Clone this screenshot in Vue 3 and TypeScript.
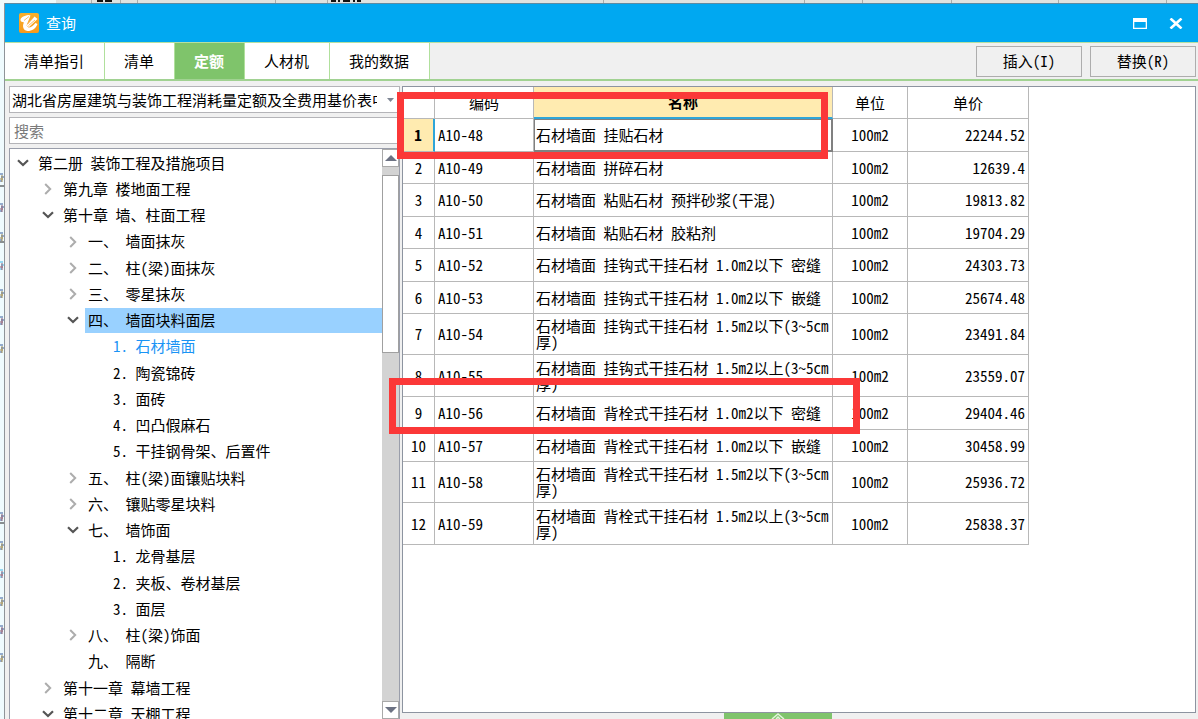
<script setup lang="ts">
import { ref } from 'vue'

interface TreeNode {
  level: number
  label: string
  state: 'open' | 'closed' | 'leaf'
  mark?: 'selected' | 'active'
}

interface PriceRow {
  code: string
  name: string
  price: string
  tall?: boolean
}

const tabs: string[] = ['清单指引', '清单', '定额', '人材机', '我的数据']
const currentTab = ref('定额')
const keyword = ref('')

const nodes: TreeNode[] = [
  { level: 0, label: '第二册 装饰工程及措施项目', state: 'open' },
  { level: 1, label: '第九章 楼地面工程', state: 'closed' },
  { level: 1, label: '第十章 墙、柱面工程', state: 'open' },
  { level: 2, label: '一、 墙面抹灰', state: 'closed' },
  { level: 2, label: '二、 柱(梁)面抹灰', state: 'closed' },
  { level: 2, label: '三、 零星抹灰', state: 'closed' },
  { level: 2, label: '四、 墙面块料面层', state: 'open', mark: 'selected' },
  { level: 3, label: '1. 石材墙面', state: 'leaf', mark: 'active' },
  { level: 3, label: '2. 陶瓷锦砖', state: 'leaf' },
  { level: 3, label: '3. 面砖', state: 'leaf' },
  { level: 3, label: '4. 凹凸假麻石', state: 'leaf' },
  { level: 3, label: '5. 干挂钢骨架、后置件', state: 'leaf' },
  { level: 2, label: '五、 柱(梁)面镶贴块料', state: 'closed' },
  { level: 2, label: '六、 镶贴零星块料', state: 'closed' },
  { level: 2, label: '七、 墙饰面', state: 'open' },
  { level: 3, label: '1. 龙骨基层', state: 'leaf' },
  { level: 3, label: '2. 夹板、卷材基层', state: 'leaf' },
  { level: 3, label: '3. 面层', state: 'leaf' },
  { level: 2, label: '八、 柱(梁)饰面', state: 'closed' },
  { level: 2, label: '九、 隔断', state: 'leaf' },
  { level: 1, label: '第十一章 幕墙工程', state: 'closed' },
  { level: 1, label: '第十二章 天棚工程', state: 'open' },
]

const rows: PriceRow[] = [
  { code: 'A10-48', name: '石材墙面 挂贴石材', price: '22244.52' },
  { code: 'A10-49', name: '石材墙面 拼碎石材', price: '12639.4' },
  { code: 'A10-50', name: '石材墙面 粘贴石材 预拌砂浆(干混)', price: '19813.82' },
  { code: 'A10-51', name: '石材墙面 粘贴石材 胶粘剂', price: '19704.29' },
  { code: 'A10-52', name: '石材墙面 挂钩式干挂石材 1.0m2以下 密缝', price: '24303.73' },
  { code: 'A10-53', name: '石材墙面 挂钩式干挂石材 1.0m2以下 嵌缝', price: '25674.48' },
  { code: 'A10-54', name: '石材墙面 挂钩式干挂石材 1.5m2以下(3~5cm厚)', price: '23491.84', tall: true },
  { code: 'A10-55', name: '石材墙面 挂钩式干挂石材 1.5m2以上(3~5cm厚)', price: '23559.07', tall: true },
  { code: 'A10-56', name: '石材墙面 背栓式干挂石材 1.0m2以下 密缝', price: '29404.46' },
  { code: 'A10-57', name: '石材墙面 背栓式干挂石材 1.0m2以下 嵌缝', price: '30458.99' },
  { code: 'A10-58', name: '石材墙面 背栓式干挂石材 1.5m2以下(3~5cm厚)', price: '25936.72', tall: true },
  { code: 'A10-59', name: '石材墙面 背栓式干挂石材 1.5m2以上(3~5cm厚)', price: '25838.37', tall: true },
]

const topSeams: number[] = [91, 120, 137, 275, 327, 603, 804, 862, 951, 1058, 1166]
const sideMarks: number[] = [170, 200, 229, 258, 286, 313, 341, 509, 538, 566, 594, 622, 650]
</script>

<template>
  <div class="screen">
    <svg class="behind-top" aria-hidden="true">
      <rect x="56" width="100%" height="3" fill="#dfe3e0" />
      <rect v-for="x in topSeams" :key="x" :x="x" width="1" height="3" fill="#a9adab" />
      <path d="M97 1h6M105 1h7M331 1h5M338 1h2M343 1h7M353 1h2M357 1h4" stroke="#111" stroke-width="2" />
    </svg>
    <div class="body-row">
      <svg class="behind-side" aria-hidden="true">
        <g v-for="(y, i) in sideMarks" :key="y" fill="none" stroke-width="1">
          <path :d="`M0 ${y + 1}h3M1 ${y + 4}h3M0 ${y + 8}h2`" :stroke="i % 6 === 3 ? '#3fb4e6' : '#3b5c9a'" />
          <path :d="`M2 ${y + 2}v7M0 ${y + 6}h3`" :stroke="i % 2 ? '#8a5a72' : '#a08a50'" />
        </g>
        <path d="M0 183h4M0 239h4M0 520h4" stroke="#222" />
      </svg>
      <div class="window">
        <header class="titlebar">
          <svg class="logo" viewBox="0 0 20 20" aria-hidden="true">
            <defs>
              <linearGradient id="logo-fill" x1="0" y1="0" x2="0" y2="1">
                <stop offset="0" stop-color="#f8b02c" />
                <stop offset="1" stop-color="#f79a1c" />
              </linearGradient>
            </defs>
            <rect width="20" height="20" rx="2" fill="url(#logo-fill)" />
            <path d="M9.500 2C5 2.500 1.500 4.500 1.500 7C1.500 8.500 3 9 5 9.500C3 12.500 4 17.500 8.500 18C13 18 17 15.500 18.500 11L16.500 10C14.500 12.500 12 14.500 9.500 14.500L7.500 12.500L11.500 2.500Z" fill="#fff" />
            <path d="M7.500 12.500L15.500 3.500L18.500 6L10 14Z" fill="#fff" />
            <path d="M5 7.500L10 3.500M8.500 11L14.500 4.500M9.500 12.500L16 7" stroke="#f8b45a" stroke-width="0.900" />
          </svg>
          <h1>查询</h1>
          <button class="win-btn" aria-label="最大化">
            <svg width="14" height="11" viewBox="0 0 14 11"><path d="M0 0H14V11H0ZM1.300 4V9.700H12.700V4Z" fill="#fff" fill-rule="evenodd" /></svg>
          </button>
          <button class="win-btn" aria-label="关闭">
            <svg width="14" height="11" viewBox="0 0 14 11"><path d="M1.500 0.500L12.500 10.500M12.500 0.500L1.500 10.500" stroke="#fff" stroke-width="2.600" /></svg>
          </button>
        </header>

        <nav class="toolbar">
          <div class="tabs" role="tablist">
            <button
              v-for="tab in tabs"
              :key="tab"
              class="tab"
              :class="{ current: tab === currentTab }"
              role="tab"
              :aria-selected="tab === currentTab"
              @click="currentTab = tab"
            >{{ tab }}</button>
          </div>
          <div class="actions">
            <button class="action">插入(I)</button>
            <button class="action">替换(R)</button>
          </div>
        </nav>

        <main class="content">
          <section class="side">
            <div class="picker">
              <select aria-label="定额库">
                <option>湖北省房屋建筑与装饰工程消耗量定额及全费用基价表中</option>
              </select>
              <svg class="picker-arrow" width="7" height="4" viewBox="0 0 7 4" aria-hidden="true"><path d="M0 0H7L3.500 4Z" fill="#7f8694" /></svg>
            </div>
            <input v-model="keyword" class="search" type="text" placeholder="搜索" aria-label="搜索" />
            <div class="tree-box">
              <ul class="tree" role="tree">
                <li
                  v-for="(node, i) in nodes"
                  :key="i"
                  :class="['node', `level-${node.level}`, node.mark]"
                  role="treeitem"
                >
                  <span class="toggle">
                    <svg v-if="node.state === 'open'" width="12" height="8" viewBox="0 0 12 8"><path d="M1 1.200L6 6L11 1.200" fill="none" stroke="#555" stroke-width="2.200" /></svg>
                    <svg v-else-if="node.state === 'closed'" width="8" height="12" viewBox="0 0 8 12"><path d="M1.200 1L6.200 6L1.200 11" fill="none" stroke="#adadad" stroke-width="2" /></svg>
                  </span>
                  <span class="label">{{ node.label }}</span>
                </li>
              </ul>
              <div class="scroll">
                <button class="scroll-btn" aria-label="向上滚动"><svg width="12" height="6" viewBox="0 0 12 6"><path d="M0 6L6 0L12 6Z" fill="#6c7283" /></svg></button>
                <div class="thumb"></div>
                <button class="scroll-btn down" aria-label="向下滚动"><svg width="12" height="6" viewBox="0 0 12 6"><path d="M0 0L6 6L12 0Z" fill="#6c7283" /></svg></button>
              </div>
            </div>
          </section>

          <section class="grid-side">
            <div class="grid-box">
              <table>
                <colgroup>
                  <col class="c-no" /><col class="c-code" /><col class="c-name" /><col class="c-unit" /><col class="c-price" />
                </colgroup>
                <thead>
                  <tr>
                    <th></th>
                    <th scope="col">编码</th>
                    <th scope="col" class="active-col">名称</th>
                    <th scope="col">单位</th>
                    <th scope="col">单价</th>
                  </tr>
                </thead>
                <tbody>
                  <tr v-for="(row, i) in rows" :key="row.code" :class="{ tall: row.tall, active: i === 0 }">
                    <th scope="row" class="no">{{ i + 1 }}</th>
                    <td>{{ row.code }}</td>
                    <td class="name">{{ row.name }}</td>
                    <td class="unit">100m2</td>
                    <td class="price">{{ row.price }}</td>
                  </tr>
                </tbody>
              </table>
              <div class="callout first"></div>
              <div class="callout second"></div>
            </div>
            <button class="expander" aria-label="展开">
              <svg width="16" height="6" viewBox="0 0 16 6"><path d="M2 6L8 1L14 6M6 6L8 4L10 6" fill="none" stroke="#e2f4dc" stroke-width="1.500" /></svg>
            </button>
          </section>
        </main>
      </div>
    </div>
  </div>
</template>

<style>
body {
  margin: 0;
  background: #f0f0f0;
}
</style>

<style scoped>
* {
  box-sizing: border-box;
}

.screen {
  display: flex;
  flex-direction: column;
  height: 100vh;
  overflow: hidden;
  color: #000;
  font-family: "Noto Sans Mono CJK SC", "Noto Sans CJK SC", "Liberation Mono", monospace;
  font-size: 15px;
  line-height: 16px;
}

button,
input,
select {
  margin: 0;
  padding: 0;
  border: 0;
  border-radius: 0;
  color: inherit;
  font: inherit;
}

.behind-top {
  display: block;
  flex: none;
  width: 100%;
  height: 3px;
  background: #effafa;
}

.body-row {
  display: flex;
  flex: 1;
  min-height: 0;
}

.behind-side {
  flex: none;
  width: 4px;
  height: 100%;
  background: #effbfe;
}

.window {
  display: flex;
  flex: 1;
  flex-direction: column;
  min-width: 0;
  border-left: 1px solid #8f9499;
  background: #f0f0f0;
}

.titlebar {
  display: flex;
  flex: none;
  align-items: center;
  height: 39px;
  padding: 0 15px 0 14px;
  border-top: 1px solid #5d8ba3;
  background: #00a8f1;
  color: #fff;
}

.logo {
  width: 20px;
  height: 20px;
  margin-right: 7px;
}

h1 {
  flex: 1;
  margin: 0;
  font-size: 15px;
  font-weight: 400;
}

.win-btn {
  display: flex;
  margin-left: 22px;
  background: none;
}

.toolbar {
  display: flex;
  flex: none;
  justify-content: space-between;
  height: 39px;
  border-top: 1px solid #b5e0a2;
  border-bottom: 2px solid #a1d292;
}

.tabs {
  display: flex;
}

.tab {
  padding: 0 20px 0 19px;
  border-right: 1px solid #b0e09c;
  background: #fff;
}

.tab.current {
  background: #7fc46b;
  color: #fff;
  font-weight: 700;
}

.actions {
  display: flex;
  gap: 8px;
  align-items: center;
  padding-right: 2px;
}

.action {
  width: 106px;
  height: 31px;
  border: 1px solid #adadad;
  background: #f0f0f0;
}

.content {
  display: flex;
  flex: 1;
  gap: 2px;
  min-height: 0;
  padding: 5px 2px 0 4px;
}

.side {
  display: flex;
  flex: none;
  flex-direction: column;
  gap: 4px;
  width: 391px;
}

.picker {
  display: grid;
  flex: none;
  align-items: center;
}

.picker > * {
  grid-area: 1 / 1;
}

.picker select {
  width: 100%;
  height: 27px;
  padding: 0 22px 0 2px;
  border: 1px solid #b4b4b8;
  background: #fff;
  appearance: none;
}

.picker-arrow {
  justify-self: end;
  margin-right: 6px;
}

.search {
  flex: none;
  width: 100%;
  height: 27px;
  padding: 0 4px;
  border: 1px solid #b4b4b8;
  background: #fff;
}

.search::placeholder {
  color: #7a7a7a;
  opacity: 1;
}

.tree-box {
  display: flex;
  flex: 1;
  min-height: 0;
  border: 1px solid #9a9eab;
  border-bottom: 0;
  background: #fff;
}

.tree {
  flex: 1;
  min-width: 0;
  margin: 0;
  padding: 1px 0 0;
  overflow: hidden;
  list-style: none;
}

.node {
  display: flex;
  align-items: center;
  height: 26px;
  white-space: pre;
}

.node:nth-child(4n) {
  height: 27px;
}

.level-1 {
  padding-left: 25px;
}

.level-2 {
  padding-left: 50px;
}

.level-3 {
  padding-left: 75px;
}

.toggle {
  display: flex;
  flex: none;
  justify-content: center;
  width: 25px;
}

.label {
  flex: 1;
  padding: 4px 3px 5px;
}

.selected .label {
  background: #99d1ff;
}

.active .label {
  color: #1a94f5;
}

.scroll {
  display: flex;
  flex: none;
  flex-direction: column;
  width: 17px;
  background: #d3d3d3;
}

.scroll-btn {
  display: flex;
  flex: none;
  align-items: center;
  justify-content: center;
  height: 18px;
  border: 1px solid #a9a9a9;
  background: #fff;
}

.thumb {
  height: 178px;
  margin-top: 8px;
  border: 1px solid #a0a0a0;
  background: #fff;
}

.down {
  margin-top: auto;
}

.grid-side {
  display: flex;
  flex: 1;
  flex-direction: column;
  align-items: center;
  min-width: 0;
}

.grid-box {
  position: relative;
  flex: 1;
  align-self: stretch;
  border: 1px solid #8d94a0;
  background: #fff;
}

.expander {
  display: flex;
  flex: none;
  justify-content: center;
  width: 108px;
  height: 6px;
  margin-right: 42px;
  background: #80c46c;
}

table {
  width: 626px;
  table-layout: fixed;
  border-collapse: separate;
  border-spacing: 0;
}

.c-no {
  width: 32px;
}

.c-code {
  width: 99px;
}

.c-name {
  width: 299px;
}

.c-unit {
  width: 75px;
}

.c-price {
  width: 121px;
}

th,
td {
  height: 32px;
  padding: 0 3px;
  border-right: 1px solid #b8b8b8;
  border-bottom: 1px solid #b8b8b8;
  font-weight: 400;
  text-align: left;
}

tbody tr:nth-child(odd) > * {
  height: 33px;
}

tbody tr.tall > * {
  height: 41px;
}

tbody tr.tall:nth-child(even) > * {
  height: 42px;
}

thead th,
.no,
.unit {
  text-align: center;
}

.name {
  padding: 0 0 0 2px;
  word-break: break-all;
}

.price {
  text-align: right;
}

.active-col {
  border-bottom: 2px solid #2fa5d8;
  background: #ffebb0;
  font-weight: 700;
}

.active .no {
  border-right: 2px solid #2fa5d8;
  background: #ffebb0;
  font-weight: 700;
}

.active .name {
  padding: 0 0 0 1px;
  border: 1px solid #808080;
  border-right-width: 2px;
  border-bottom-width: 2px;
}

.callout {
  position: absolute;
  border: 7px solid #fb3838;
  pointer-events: none;
}

.first {
  top: 5px;
  left: -6px;
  width: 431px;
  height: 67px;
}

.second {
  top: 291px;
  left: -14px;
  width: 471px;
  height: 56px;
}
</style>
